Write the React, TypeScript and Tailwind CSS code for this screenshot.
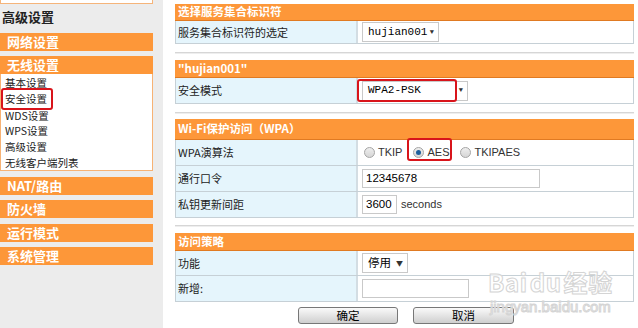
import type { ReactNode } from "react";

const cjk = { fontFamily: '"Noto Sans CJK SC", "Liberation Sans", sans-serif' };
const mono = { fontFamily: '"Liberation Mono", "Noto Sans CJK SC", monospace' };
const sans = { fontFamily: '"Liberation Sans", "Noto Sans CJK SC", sans-serif' };

function SideBar({ label }: { label: string }) {
  return (
    <div className="h-[18px] bg-[#fd9739] text-white text-[13px] font-bold leading-[18px] pl-[7px]" style={cjk}>
      {label}
    </div>
  );
}

function Header({ title, h }: { title: string; h: string }) {
  return (
    <div className={`${h} bg-[#fd9739] border-b border-[#e07a22] text-white text-[11.5px] font-bold flex items-center pl-[3px]`} style={cjk}>
      {title}
    </div>
  );
}

function Row({ label, h, children }: { label: string; h: string; children?: ReactNode }) {
  return (
    <div className={`${h} flex border-b border-x border-[#c6d0d6]`}>
      <div className="w-[182px] bg-[#e5f5fc] border-r-2 border-[#d3dde3] flex items-center pl-[2px] text-[11px] text-[#222]" style={cjk}>
        {label}
      </div>
      <div className="flex-1 bg-white flex items-center pl-[4px] text-[11px] text-[#222]">{children}</div>
    </div>
  );
}

function Select({ text, w }: { text: string; w: string }) {
  return (
    <div className={`${w} h-[20px] border border-[#c9c9c9] bg-white flex items-center justify-between pl-[5px] pr-[4px] text-[11px] text-black`} style={mono}>
      <span>{text}</span>
      <span className="text-[7px] text-[#333]">▼</span>
    </div>
  );
}

function Radio({ on, label }: { on?: boolean; label: string }) {
  return (
    <span className="flex items-center gap-[3px] text-[11px] text-[#333]" style={sans}>
      <span className="w-[11px] h-[11px] rounded-full border border-[#a5a5a5] bg-gradient-to-b from-[#eee] to-[#d6d6d6] flex items-center justify-center">
        {on && <span className="w-[5px] h-[5px] rounded-full bg-[#1d5f9c]" />}
      </span>
      {label}
    </span>
  );
}

function Sep() {
  return <div className="h-[2px] bg-[#d6d6d6] border-b border-[#eee]" />;
}

export default function App() {
  return (
    <div className="w-[638px] h-[328px] bg-white flex overflow-hidden relative">
      <div className="w-[163px] bg-[#ececec] shrink-0 flex flex-col">
        <div className="w-[153px] h-[4px] bg-white border border-t-0 border-[#f5b47a]" />
        <div className="w-[153px] h-[29px] pl-[2px] pb-[4px] text-[13px] font-bold text-[#222] flex items-center" style={cjk}>
          高级设置
        </div>
        <div className="w-[153px] flex flex-col">
          <SideBar label="网络设置" />
          <div className="h-[5px]" />
          <SideBar label="无线设置" />
          <div className="h-[97px] bg-white border border-t-0 border-[#f7b274] flex flex-col pt-[1px] text-[10.5px] text-[#222] leading-[15.8px] pl-[4px]" style={cjk}>
            <span>基本设置</span>
            <span className="relative w-fit">
              安全设置
              <span className="absolute -left-[4px] -top-[3px] w-[52px] h-[22px] border-2 border-[#d8141b] rounded-[3px]" />
            </span>
            <span className="mt-[1px]">WDS设置</span>
            <span>WPS设置</span>
            <span>高级设置</span>
            <span>无线客户端列表</span>
          </div>
          <div className="h-[6px]" />
          <SideBar label="NAT/路由" />
          <div className="h-[5px]" />
          <SideBar label="防火墙" />
          <div className="h-[6px]" />
          <SideBar label="运行模式" />
          <div className="h-[5px]" />
          <SideBar label="系统管理" />
        </div>
      </div>

      <div className="ml-[12px] w-[459px] flex flex-col pt-[4px]">
        <Header title="选择服务集合标识符" h="h-[17px]" />
        <Row label="服务集合标识符的选定" h="h-[23px]">
          <Select text="hujian001" w="w-[77px]" />
        </Row>
        <div className="h-[8px]" />
        <Sep />
        <div className="h-[6px]" />
        <Header title={'"hujian001"'} h="h-[18px]" />
        <Row label="安全模式" h="h-[26px]">
          <div className="relative">
            <Select text="WPA2-PSK" w="w-[106px]" />
            <span className="absolute -left-[5px] -top-[2px] w-[100px] h-[23px] border-2 border-[#d8141b] rounded-[3px]" />
          </div>
        </Row>
        <div className="h-[8px]" />
        <Sep />
        <div className="h-[5px]" />
        <Header title="Wi-Fi保护访问（WPA）" h="h-[21px]" />
        <Row label="WPA演算法" h="h-[26px]">
          <div className="flex items-center gap-[11px] pl-[2px]">
            <Radio label="TKIP" />
            <span className="relative">
              <Radio on label="AES" />
              <span className="absolute -left-[6px] -top-[6px] w-[45px] h-[23px] border-2 border-[#d8141b] rounded-[3px]" />
            </span>
            <Radio label="TKIPAES" />
          </div>
        </Row>
        <Row label="通行口令" h="h-[26px]">
          <div className="w-[178px] h-[19px] border border-[#c9c9c9] flex items-center pl-[3px] text-[11.5px] text-black" style={sans}>
            12345678
          </div>
        </Row>
        <Row label="私钥更新间距" h="h-[26px]">
          <div className="w-[35px] h-[19px] border border-[#c9c9c9] flex items-center pl-[3px] text-[11.5px] text-black" style={sans}>
            3600
          </div>
          <span className="ml-[4px] text-[11px] text-[#333]" style={sans}>seconds</span>
        </Row>
        <div className="h-[7px]" />
        <Sep />
        <div className="h-[6px]" />
        <Header title="访问策略" h="h-[18px]" />
        <Row label="功能" h="h-[25px]">
          <div className="w-[46px] h-[20px] border border-[#c9c9c9] flex items-center justify-between pl-[5px] pr-[4px] text-[11.5px] text-black" style={cjk}>
            <span>停用</span>
            <span className="text-[7px] text-[#333]">▼</span>
          </div>
        </Row>
        <Row label="新增:" h="h-[26px]">
          <div className="w-[107px] h-[19px] border border-[#c9c9c9]" />
        </Row>
        <div className="flex pl-[123px] gap-[15px] mt-[5px]">
          <button className="w-[100px] h-[17px] rounded-[3px] border border-[#777] bg-gradient-to-b from-[#fafafa] to-[#cfcfcf] text-[11.5px] text-black leading-none" style={cjk}>
            确定
          </button>
          <button className="w-[101px] h-[17px] rounded-[3px] border border-[#777] bg-gradient-to-b from-[#fafafa] to-[#cfcfcf] text-[11.5px] text-black leading-none" style={cjk}>
            取消
          </button>
        </div>
      </div>

      <div className="absolute left-[488px] top-[270px] text-white/70 [-webkit-text-stroke:1px_#d4d4d4] pointer-events-none flex flex-col items-center gap-[5px]" style={sans}>
        <span className="text-[24px] font-bold leading-[24px] tracking-wide" style={cjk}>Bai<span className="mx-[2px]">du</span>经验</span>
        <span className="text-[15px] leading-[15px]">jingyan.baidu.com</span>
      </div>
    </div>
  );
}
